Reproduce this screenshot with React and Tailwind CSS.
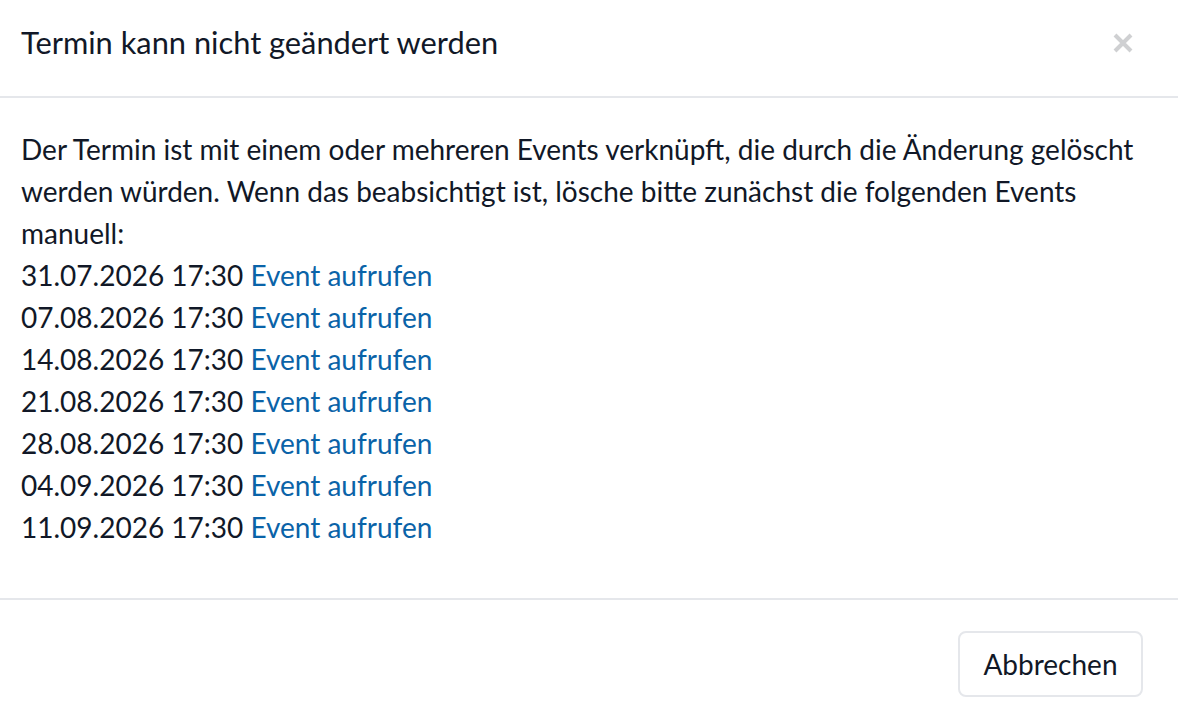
import React from "react";

const events = [
  "31.07.2026 17:30",
  "07.08.2026 17:30",
  "14.08.2026 17:30",
  "21.08.2026 17:30",
  "28.08.2026 17:30",
  "04.09.2026 17:30",
  "11.09.2026 17:30",
];

export default function App() {
  return (
    <div className="w-[1178px] h-[724px] bg-white text-[#111827] overflow-hidden" style={{ fontFamily: "Lato, 'Noto Sans', sans-serif" }}>
      <div className="flex items-center justify-between h-[98px] pl-[21px] pr-[45px] pb-[10px] border-b-2 border-[#e5e7eb]">
        <h1 className="text-[30.8px] leading-none">Termin kann nicht geändert werden</h1>
        <button className="text-[#cfd0d2]">
          <svg width="20" height="20" viewBox="0 0 20 20">
            <path d="M2 2 L18 18 M18 2 L2 18" stroke="currentColor" strokeWidth="4" strokeLinecap="butt" />
          </svg>
        </button>
      </div>
      <div className="px-[21px] pt-[30px] pb-[50px] text-[28px] leading-[42px] border-b-2 border-[#e5e7eb]">
        <p>
          Der Termin ist mit einem oder mehreren Events verknüpft, die durch die Änderung gelöscht werden würden. Wenn das beabsichtigt ist, lösche bitte zunächst die folgenden Events manuell:
        </p>
        {events.map((e) => (
          <div key={e}>
            {e} <a className="text-[#0a63a8]" href="#">Event aufrufen</a>
          </div>
        ))}
      </div>
      <div className="flex justify-end pt-[31px] pr-[35px]">
        <button className="h-[66px] w-[185px] rounded-[8px] border-2 border-[#e5e7eb] bg-white text-[28px] text-[#111827]">
          Abbrechen
        </button>
      </div>
    </div>
  );
}
